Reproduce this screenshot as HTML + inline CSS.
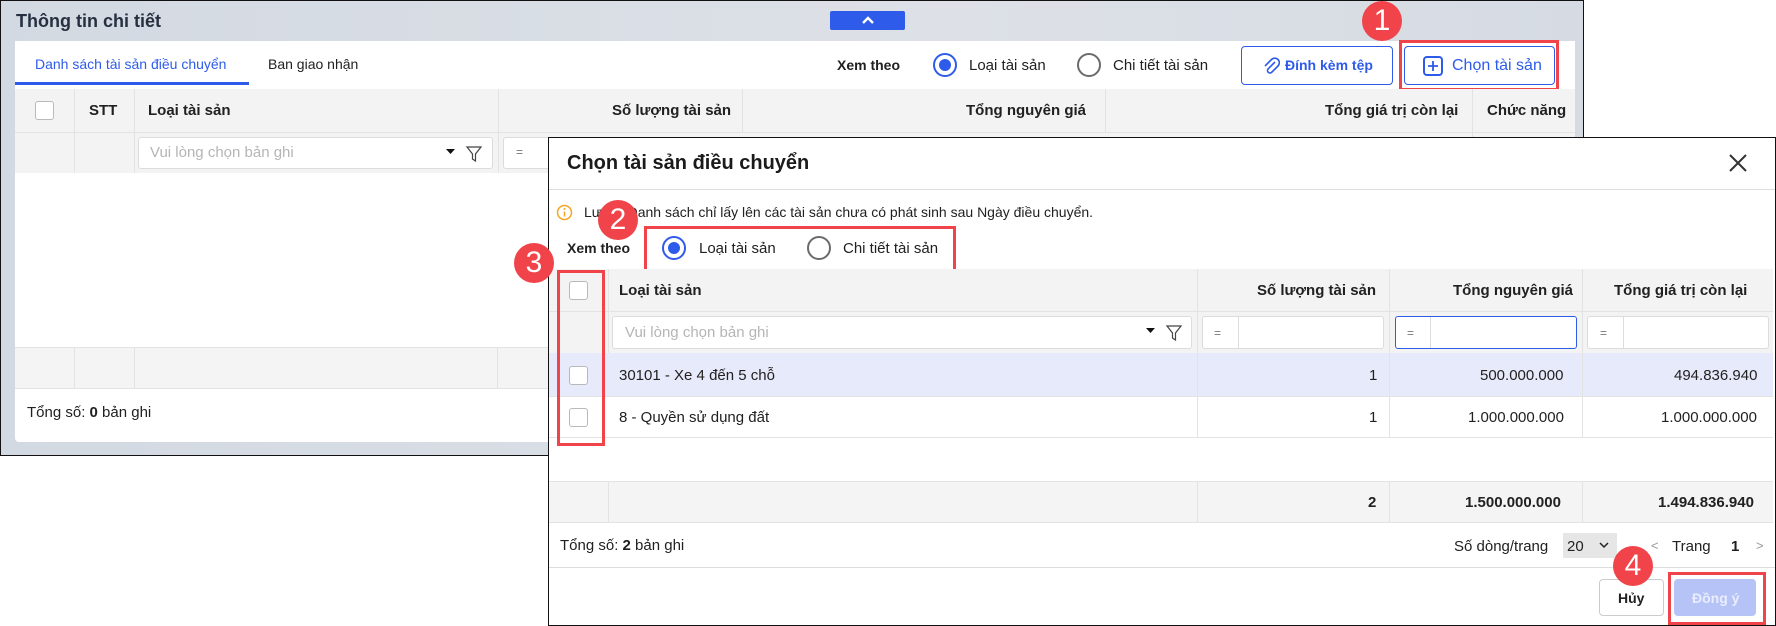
<!DOCTYPE html>
<html><head><meta charset="utf-8"><style>
*{box-sizing:border-box;margin:0;padding:0}
body{width:1776px;height:626px;position:relative;background:#fff;font-family:"Liberation Sans",Arial,sans-serif;color:#212121;font-size:15px;overflow:hidden}
.a{position:absolute}
.t{position:absolute;white-space:nowrap;line-height:1}
.b{font-weight:bold}
.cb{position:absolute;width:19px;height:19px;border:1px solid #b9b9b9;border-radius:3px;background:#fff}
.vl{position:absolute;width:1px;background:#e3e3e3}
.hl{position:absolute;height:1px;background:#e3e3e3}
.badge{position:absolute;width:40px;height:40px;border-radius:50%;background:#f0434a;color:#fff;font-size:30px;text-align:center;line-height:40px}
.red{position:absolute;border:3px solid #f0434a}
.radio{position:absolute;width:24px;height:24px;border-radius:50%;border:2px solid #6b6b6b;background:#fff}
.radio.on{border-color:#2e5bea}
.radio.on:after{content:"";position:absolute;left:4px;top:4px;width:12px;height:12px;border-radius:50%;background:#2e5bea}
.inp{position:absolute;border:1px solid #dcdcdc;border-radius:3px;background:#fff}
.ph{color:#b5b5b5}
</style></head><body>

<div class="a" style="left:0;top:0;width:1584px;height:456px;border:1px solid #111;background:linear-gradient(90deg,#d3d9e2,#dde1e7 60%,#d6dbe3)"></div>
<div class="t" style="left:16px;top:12px;font-size:18px;font-weight:bold;color:#263040">Thông tin chi tiết</div>
<div class="a" style="left:830px;top:11px;width:75px;height:19px;background:#2e5bea;border-radius:2px"></div>
<svg class="a" style="left:860px;top:14px" width="16" height="12"><path d="M3 9 L8 4 L13 9" stroke="#fff" stroke-width="2.4" fill="none"/></svg>

<div class="a" style="left:15px;top:41px;width:1560px;height:401px;background:#fff;border-radius:0 0 4px 4px"></div>
<div class="t" style="left:35px;top:57px;font-size:14px;color:#2e5bea">Danh sách tài sản điều chuyển</div>
<div class="a" style="left:15px;top:82px;width:234px;height:3px;background:#2e5bea"></div>
<div class="t" style="left:268px;top:57px;font-size:14px">Ban giao nhận</div>
<div class="t b" style="left:837px;top:58px;font-size:14px">Xem theo</div>
<div class="radio on" style="left:933px;top:53px"></div>
<div class="t" style="left:969px;top:58px;font-size:15px">Loại tài sản</div>
<div class="radio" style="left:1077px;top:53px"></div>
<div class="t" style="left:1113px;top:58px;font-size:15px">Chi tiết tài sản</div>
<div class="a" style="left:1241px;top:46px;width:152px;height:39px;border:1px solid #2e5bea;border-radius:4px"></div>
<svg class="a" style="left:1262px;top:56px" width="18" height="20"><path d="M13 6 L6 13 a2.5 2.5 0 0 0 3.5 3.5 L16 10 a4.5 4.5 0 0 0 -6.5 -6.5 L3 10" stroke="#2e5bea" stroke-width="1.6" fill="none"/></svg>
<div class="t b" style="left:1285px;top:58px;font-size:14px;color:#2e5bea">Đính kèm tệp</div>
<div class="a" style="left:1404px;top:46px;width:151px;height:39px;border:1px solid #2e5bea;border-radius:4px"></div>
<div class="a" style="left:1423px;top:56px;width:20px;height:20px;border:2px solid #2e5bea;border-radius:4px"></div>
<svg class="a" style="left:1423px;top:56px" width="20" height="20"><path d="M10 5v10M5 10h10" stroke="#2e5bea" stroke-width="1.8"/></svg>
<div class="t" style="left:1452px;top:58px;font-size:16px;color:#2e5bea">Chọn tài sản</div>
<div class="red" style="left:1399px;top:40px;width:160px;height:51px"></div>
<div class="badge" style="left:1362px;top:1px">1</div>

<div class="a" style="left:15px;top:89px;width:1560px;height:84px;background:#f3f3f3"></div>
<div class="hl" style="left:15px;top:132px;width:1560px"></div>
<div class="vl" style="left:74px;top:89px;height:84px"></div>
<div class="vl" style="left:134px;top:89px;height:84px"></div>
<div class="vl" style="left:498px;top:89px;height:84px"></div>
<div class="vl" style="left:742px;top:89px;height:43px"></div>
<div class="vl" style="left:1105px;top:89px;height:43px"></div>
<div class="vl" style="left:1472px;top:89px;height:84px"></div>
<div class="cb" style="left:35px;top:101px"></div>
<div class="t b" style="left:89px;top:103px">STT</div>
<div class="t b" style="left:148px;top:103px">Loại tài sản</div>
<div class="t b" style="left:612px;top:103px">Số lượng tài sản</div>
<div class="t b" style="left:966px;top:103px">Tổng nguyên giá</div>
<div class="t b" style="left:1325px;top:103px">Tổng giá trị còn lại</div>
<div class="t b" style="left:1487px;top:103px">Chức năng</div>
<div class="inp" style="left:138px;top:137px;width:355px;height:32px"></div>
<div class="t ph" style="left:150px;top:145px">Vui lòng chọn bản ghi</div>
<svg class="a" style="left:445px;top:145px" width="48" height="18"><path d="M1 4h9l-4.5 5z" fill="#111"/><path d="M22 2h14l-5.5 7v7l-3-2v-5z" stroke="#444" stroke-width="1.2" fill="none"/></svg>
<div class="inp" style="left:503px;top:137px;width:60px;height:32px"></div>
<div class="t" style="left:516px;top:146px;font-size:12px;color:#777">=</div>

<div class="a" style="left:15px;top:347px;width:1560px;height:42px;background:#f4f4f4;border-top:1px solid #e3e3e3;border-bottom:1px solid #e3e3e3"></div>
<div class="vl" style="left:74px;top:347px;height:42px"></div>
<div class="vl" style="left:134px;top:347px;height:42px"></div>
<div class="vl" style="left:497px;top:347px;height:42px"></div>
<div class="t" style="left:27px;top:405px">Tổng số: <b>0</b> bản ghi</div>

<div class="a" style="left:548px;top:137px;width:1228px;height:489px;border:1px solid #111;background:#fff"></div>
<div class="t" style="left:567px;top:153px;font-size:20px;font-weight:bold;color:#1b1b1b">Chọn tài sản điều chuyển</div>
<svg class="a" style="left:1728px;top:153px" width="20" height="20"><path d="M2 2L18 18M18 2L2 18" stroke="#333" stroke-width="2"/></svg>
<div class="hl" style="left:549px;top:189px;width:1226px;background:#ddd"></div>
<svg class="a" style="left:556px;top:204px" width="17" height="17"><circle cx="8.5" cy="8.5" r="7" stroke="#f5a623" stroke-width="1.5" fill="none"/><path d="M8.5 7.5v5" stroke="#f5a623" stroke-width="1.5"/><circle cx="8.5" cy="5" r="1" fill="#f5a623"/></svg>
<div class="t" style="left:584px;top:205px;font-size:14px">Lưu ý: Danh sách chỉ lấy lên các tài sản chưa có phát sinh sau Ngày điều chuyển.</div>
<div class="t b" style="left:567px;top:241px;font-size:14px">Xem theo</div>
<div class="radio on" style="left:662px;top:236px"></div>
<div class="t" style="left:699px;top:241px">Loại tài sản</div>
<div class="radio" style="left:807px;top:236px"></div>
<div class="t" style="left:843px;top:241px">Chi tiết tài sản</div>
<div class="red" style="left:644px;top:226px;width:312px;height:46px"></div>
<div class="badge" style="left:598px;top:200px">2</div>

<div class="a" style="left:549px;top:269px;width:1224px;height:84px;background:#f3f3f3"></div>
<div class="hl" style="left:549px;top:311px;width:1224px"></div>
<div class="vl" style="left:608px;top:269px;height:84px"></div>
<div class="vl" style="left:1197px;top:269px;height:168px"></div>
<div class="vl" style="left:1389px;top:269px;height:168px"></div>
<div class="vl" style="left:1582px;top:269px;height:168px"></div>
<div class="cb" style="left:569px;top:281px"></div>
<div class="t b" style="left:619px;top:283px">Loại tài sản</div>
<div class="t b" style="left:1257px;top:283px">Số lượng tài sản</div>
<div class="t b" style="left:1453px;top:283px">Tổng nguyên giá</div>
<div class="t b" style="left:1614px;top:283px">Tổng giá trị còn lại</div>
<div class="inp" style="left:612px;top:316px;width:580px;height:33px"></div>
<div class="t ph" style="left:625px;top:325px">Vui lòng chọn bản ghi</div>
<svg class="a" style="left:1145px;top:324px" width="48" height="18"><path d="M1 4h9l-4.5 5z" fill="#111"/><path d="M22 2h14l-5.5 7v7l-3-2v-5z" stroke="#444" stroke-width="1.2" fill="none"/></svg>
<div class="inp" style="left:1202px;top:316px;width:182px;height:33px"></div>
<div class="vl" style="left:1238px;top:317px;height:31px;background:#dcdcdc"></div>
<div class="t" style="left:1214px;top:327px;font-size:12px;color:#777">=</div>
<div class="inp" style="left:1395px;top:316px;width:182px;height:33px;border-color:#2e5bea"></div>
<div class="vl" style="left:1430px;top:317px;height:31px;background:#dcdcdc"></div>
<div class="t" style="left:1407px;top:327px;font-size:12px;color:#777">=</div>
<div class="inp" style="left:1587px;top:316px;width:182px;height:33px"></div>
<div class="vl" style="left:1623px;top:317px;height:31px;background:#dcdcdc"></div>
<div class="t" style="left:1600px;top:327px;font-size:12px;color:#777">=</div>

<div class="a" style="left:549px;top:353px;width:1224px;height:43px;background:#e7eafb"></div>
<div class="hl" style="left:549px;top:396px;width:1224px"></div>
<div class="hl" style="left:549px;top:437px;width:1224px"></div>
<div class="vl" style="left:1197px;top:353px;height:84px"></div>
<div class="vl" style="left:1389px;top:353px;height:84px"></div>
<div class="vl" style="left:1582px;top:353px;height:84px"></div>
<div class="cb" style="left:569px;top:366px"></div>
<div class="cb" style="left:569px;top:408px"></div>
<div class="t" style="left:619px;top:368px">30101 - Xe 4 đến 5 chỗ</div>
<div class="t" style="left:619px;top:410px">8 - Quyền sử dụng đất</div>
<div class="t" style="left:1369px;top:368px">1</div>
<div class="t" style="left:1480px;top:368px">500.000.000</div>
<div class="t" style="left:1674px;top:368px">494.836.940</div>
<div class="t" style="left:1369px;top:410px">1</div>
<div class="t" style="left:1468px;top:410px">1.000.000.000</div>
<div class="t" style="left:1661px;top:410px">1.000.000.000</div>

<div class="a" style="left:549px;top:481px;width:1224px;height:42px;background:#f4f4f4;border-top:1px solid #e3e3e3;border-bottom:1px solid #e3e3e3"></div>
<div class="vl" style="left:608px;top:481px;height:42px"></div>
<div class="vl" style="left:1197px;top:481px;height:42px"></div>
<div class="vl" style="left:1389px;top:481px;height:42px"></div>
<div class="vl" style="left:1582px;top:481px;height:42px"></div>
<div class="t b" style="left:1368px;top:495px">2</div>
<div class="t b" style="left:1465px;top:495px">1.500.000.000</div>
<div class="t b" style="left:1658px;top:495px">1.494.836.940</div>
<div class="red" style="left:557px;top:270px;width:48px;height:176px"></div>
<div class="badge" style="left:514px;top:243px">3</div>

<div class="t" style="left:560px;top:538px">Tổng số: <b>2</b> bản ghi</div>
<div class="t" style="left:1454px;top:539px">Số dòng/trang</div>
<div class="a" style="left:1563px;top:533px;width:54px;height:25px;background:#e6e6e6"></div>
<div class="t" style="left:1567px;top:539px">20</div>
<svg class="a" style="left:1599px;top:541px" width="10" height="8"><path d="M1 2l4 4 4-4" stroke="#222" stroke-width="1.5" fill="none"/></svg>
<div class="t" style="left:1651px;top:539px;font-size:13px;color:#999">&lt;</div>
<div class="t" style="left:1672px;top:539px">Trang</div>
<div class="t b" style="left:1731px;top:539px">1</div>
<div class="t" style="left:1756px;top:539px;font-size:13px;color:#999">&gt;</div>
<div class="hl" style="left:549px;top:567px;width:1226px;background:#ddd"></div>
<div class="a" style="left:1599px;top:579px;width:65px;height:37px;border:1px solid #ccc;border-radius:4px;background:#fff"></div>
<div class="t b" style="left:1618px;top:591px;font-size:14px">Hủy</div>
<div class="a" style="left:1674px;top:579px;width:82px;height:37px;border-radius:4px;background:#b6c3f6"></div>
<div class="t b" style="left:1692px;top:591px;font-size:14px;color:#e9edfd">Đồng ý</div>
<div class="red" style="left:1668px;top:572px;width:98px;height:53px"></div>
<div class="badge" style="left:1613px;top:546px">4</div>
</body></html>
